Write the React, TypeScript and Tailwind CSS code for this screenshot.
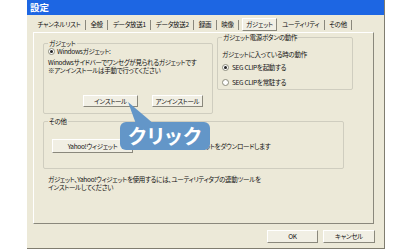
import React from "react";

const font = "font-['Noto_Sans_CJK_JP','Noto_Sans',sans-serif] [font-feature-settings:'palt']";
const small = "text-[6.5px] tracking-[-0.3px] whitespace-nowrap";

const tabs = [
    "チャンネルリスト",
    "全般",
    "データ放送1",
    "データ放送2",
    "録画",
    "映像",
    "ガジェット",
    "ユーティリティ",
    "その他",
];

function Radio({ checked = false }: { checked?: boolean }) {
    return (
        <span className="w-[7px] h-[7px] rounded-full border border-[#8c8c7c] bg-white flex items-center justify-center shrink-0">
            {checked && <span className="w-[3px] h-[3px] rounded-full bg-[#222]" />}
        </span>
    );
}

function Button({ label, className = "" }: { label: string; className?: string }) {
    return (
        <div
            className={`h-[12px] flex items-center justify-center border border-t-white border-l-white border-r-[#8a887c] border-b-[#8a887c] bg-[#f1efe4] leading-none text-[#111] ${small} ${className}`}
        >
            {label}
        </div>
    );
}

function Group({
    label,
    className = "",
    children,
}: {
    label: string;
    className?: string;
    children: React.ReactNode;
}) {
    return (
        <div className={`relative border border-[#cfcdbf] rounded-[2px] ${className}`}>
            <span className="absolute -top-[5px] left-[4px] px-[1px] bg-[#ece9d8] leading-[9px] text-[#111]">
                {label}
            </span>
            {children}
        </div>
    );
}

export default function App() {
    return (
        <div className={`w-[400px] h-[250px] bg-white relative overflow-hidden ${font}`}>
            <div className="ml-[27px] w-[358px] h-[249px] bg-[#ece9d8] border-r border-b border-[#807d70] flex flex-col">
                {/* title bar */}
                <div className="h-[15px] bg-[#1d66e3] flex items-center pl-[3px]">
                    <span className="text-white font-bold text-[9.5px] leading-none">設定</span>
                </div>

                {/* tabs */}
                <div className={`h-[17px] flex items-end pl-[6px] leading-none text-[#111] ${small}`}>
                    {tabs.map((t) =>
                        t === "ガジェット" ? (
                            <div
                                key={t}
                                className="h-[13px] px-[3px] mb-[1px] flex items-center border border-t-white border-l-white border-r-[#8a887c] border-b-[#8a887c] bg-[#f1efe4] ml-[3px] mr-[1px]"
                            >
                                {t}
                            </div>
                        ) : (
                            <div key={t} className="h-[13px] mb-[1px] flex items-center">
                                <span className="px-[4.5px]">{t}</span>
                                <span className="w-px h-[10px] bg-[#8a887c]" />
                            </div>
                        )
                    )}
                </div>

                {/* panel */}
                <div className={`ml-[6px] w-[341px] h-[192px] border border-t-white border-l-white border-r-[#8a887c] border-b-[#8a887c] px-[9px] leading-[8px] text-[#111] ${small}`}>
                    <div className="flex items-start gap-[4px]">
                        <Group label="ガジェット" className="mt-[10px] w-[170px] h-[71px]">
                            <div className="pl-[4px] pt-[3px] flex items-center gap-[2px]">
                                <Radio checked />
                                <span>Windowsガジェット:</span>
                            </div>
                            <div className="pl-[4px] pt-[3px]">
                                <div>Winodwsサイドバーでワンセグが見られるガジェットです</div>
                                <div>※アンインストールは手動で行ってください</div>
                            </div>
                            <div className="flex gap-[14px] pl-[39px] pt-[21px]">
                                <Button label="インストール" className="w-[55px]" />
                                <Button label="アンインストール" className="w-[51px]" />
                            </div>
                        </Group>
                        <Group label="ガジェット電源ボタンの動作" className="mt-[4px] w-[136px] h-[53px]">
                            <div className="pl-[4px] pt-[12px]">ガジェットに入っている時の動作</div>
                            <div className="pl-[4px] pt-[5px] flex items-center gap-[3px]">
                                <Radio checked />
                                <span>SEG CLIPを起動する</span>
                            </div>
                            <div className="pl-[4px] pt-[7px] flex items-center gap-[3px]">
                                <Radio />
                                <span>SEG CLIPを常駐する</span>
                            </div>
                        </Group>
                    </div>

                    <Group label="その他" className="mt-[7px] w-[301px] h-[48px]">
                        <div className="pl-[8px] pt-[17px] flex items-center gap-[32px]">
                            <Button label="Yahoo!ウィジェット" className="w-[81px] h-[14px]" />
                            <span>Yahoo!ウィジェットをダウンロードします</span>
                        </div>
                    </Group>

                    <div className="pl-[5px] pt-[6px]">
                        <div>ガジェット、Yahoo!ウィジェットを使用するには、ユーティリティタブの連動ツールを</div>
                        <div>インストールしてください</div>
                    </div>
                </div>

                {/* footer buttons */}
                <div className="flex justify-end gap-[5px] pr-[9px] pt-[6px]">
                    <Button label="OK" className="w-[51px] h-[13px]" />
                    <Button label="キャンセル" className="w-[52px] h-[13px]" />
                </div>
            </div>

            {/* callout */}
            <svg className="absolute left-0 top-0" width="400" height="250">
                <polygon points="128,102 136,124 154,124" fill="#6396c8" />
            </svg>
            <div className="absolute left-[120px] top-[122px] w-[90px] h-[28px] rounded-[6px] bg-[#6396c8] flex items-center justify-center">
                <span className="text-white font-bold text-[20px] leading-none tracking-[1px]">クリック</span>
            </div>
        </div>
    );
}
